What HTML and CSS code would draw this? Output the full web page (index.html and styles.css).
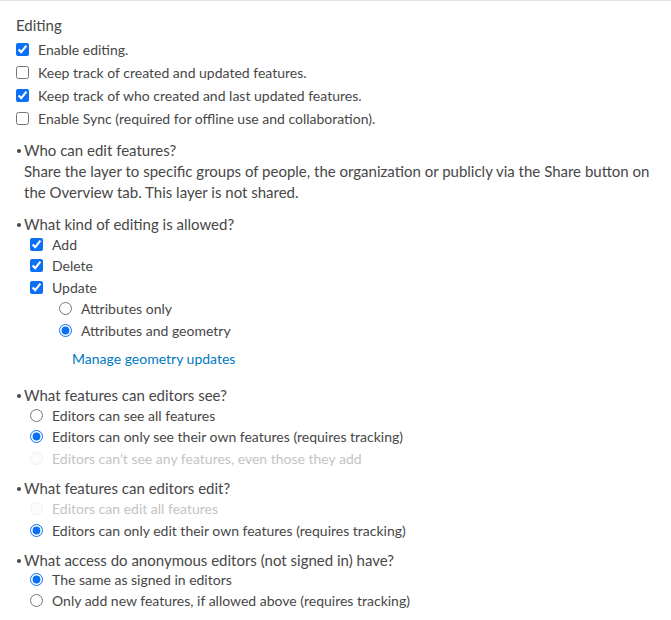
FILE: index.html
```html
<!DOCTYPE html>
<html>
<head>
<meta charset="utf-8">
<link rel="stylesheet" href="styles.css">
</head>
<body>
<div class="panel">
  <div class="title">Editing</div>
  <div class="top-list">
    <label class="opt"><input type="checkbox" checked><span>Enable editing.</span></label>
    <label class="opt"><input type="checkbox"><span>Keep track of created and updated features.</span></label>
    <label class="opt"><input type="checkbox" checked><span>Keep track of who created and last updated features.</span></label>
    <label class="opt"><input type="checkbox"><span>Enable Sync (required for offline use and collaboration).</span></label>
  </div>

  <div class="section desc-section">
    <div class="question">Who can edit features?</div>
    <p class="desc">Share the layer to specific groups of people, the organization or publicly via the Share button on the Overview tab. This layer is not shared.</p>
  </div>

  <div class="section kind">
    <div class="question">What kind of editing is allowed?</div>
    <div class="items">
      <label class="opt"><input type="checkbox" checked><span>Add</span></label>
      <label class="opt"><input type="checkbox" checked><span>Delete</span></label>
      <label class="opt"><input type="checkbox" checked><span>Update</span></label>
      <div class="sub">
        <label class="opt"><input type="radio" name="upd"><span>Attributes only</span></label>
        <label class="opt"><input type="radio" name="upd" checked><span>Attributes and geometry</span></label>
      </div>
      <a class="link" href="#">Manage geometry updates</a>
    </div>
  </div>

  <div class="section wide">
    <div class="question">What features can editors see?</div>
    <div class="items">
      <label class="opt"><input type="radio" name="see"><span>Editors can see all features</span></label>
      <label class="opt"><input type="radio" name="see" checked><span>Editors can only see their own features (requires tracking)</span></label>
      <label class="opt disabled"><input type="radio" name="see" disabled><span>Editors can't see any features, even those they add</span></label>
    </div>
  </div>

  <div class="section">
    <div class="question">What features can editors edit?</div>
    <div class="items">
      <label class="opt disabled"><input type="radio" name="edit" disabled><span>Editors can edit all features</span></label>
      <label class="opt"><input type="radio" name="edit" checked><span>Editors can only edit their own features (requires tracking)</span></label>
    </div>
  </div>

  <div class="section">
    <div class="question">What access do anonymous editors (not signed in) have?</div>
    <div class="items tight">
      <label class="opt"><input type="radio" name="anon" checked><span>The same as signed in editors</span></label>
      <label class="opt"><input type="radio" name="anon"><span>Only add new features, if allowed above (requires tracking)</span></label>
    </div>
  </div>
</div>
</body>
</html>
```

FILE: styles.css
```css
html, body {
  margin: 0;
  padding: 0;
  background: #fff;
}
body {
  font-family: Lato, "Noto Sans", sans-serif;
  font-size: 14px;
  color: #474747;
}
.panel {
  border-top: 1px solid #e3e3e3;
  padding: 13px 16px 0 16px;
}
.title {
  font-size: 15px;
  line-height: 22px;
}
.top-list {
  margin-top: 1.5px;
}
.top-list .opt {
  height: 23px;
}
.opt {
  display: flex;
  align-items: center;
  gap: 9px;
  height: 21.5px;
  line-height: 21px;
}
.opt input {
  margin: 0;
  width: 13px;
  height: 13px;
  accent-color: #0b70f5;
  flex: none;
}
.opt.disabled {
  color: #c4c4c4;
}
.opt.disabled input {
  opacity: 0.3;
}
.section {
  margin-top: 9px;
  padding-left: 8px;
}
.section.desc-section {
  margin-top: 10px;
}
.section.kind {
  margin-top: 11px;
}
.section.wide {
  margin-top: 16px;
}
.question {
  position: relative;
  font-size: 15px;
  line-height: 20px;
}
.desc-section .question {
  line-height: 21px;
}
.question::before {
  content: "";
  position: absolute;
  left: -7.5px;
  top: 9px;
  width: 4px;
  height: 4px;
  border-radius: 50%;
  background: #474747;
}
.desc {
  margin: 0;
  font-size: 15px;
  line-height: 21px;
}
.items {
  padding-left: 6px;
}
.items.tight {
  margin-top: -1.5px;
}
.sub {
  padding-left: 29px;
}
.link {
  display: block;
  margin: 6.5px 0 0 42px;
  line-height: 21px;
  color: #0079c1;
  text-decoration: none;
}
```
